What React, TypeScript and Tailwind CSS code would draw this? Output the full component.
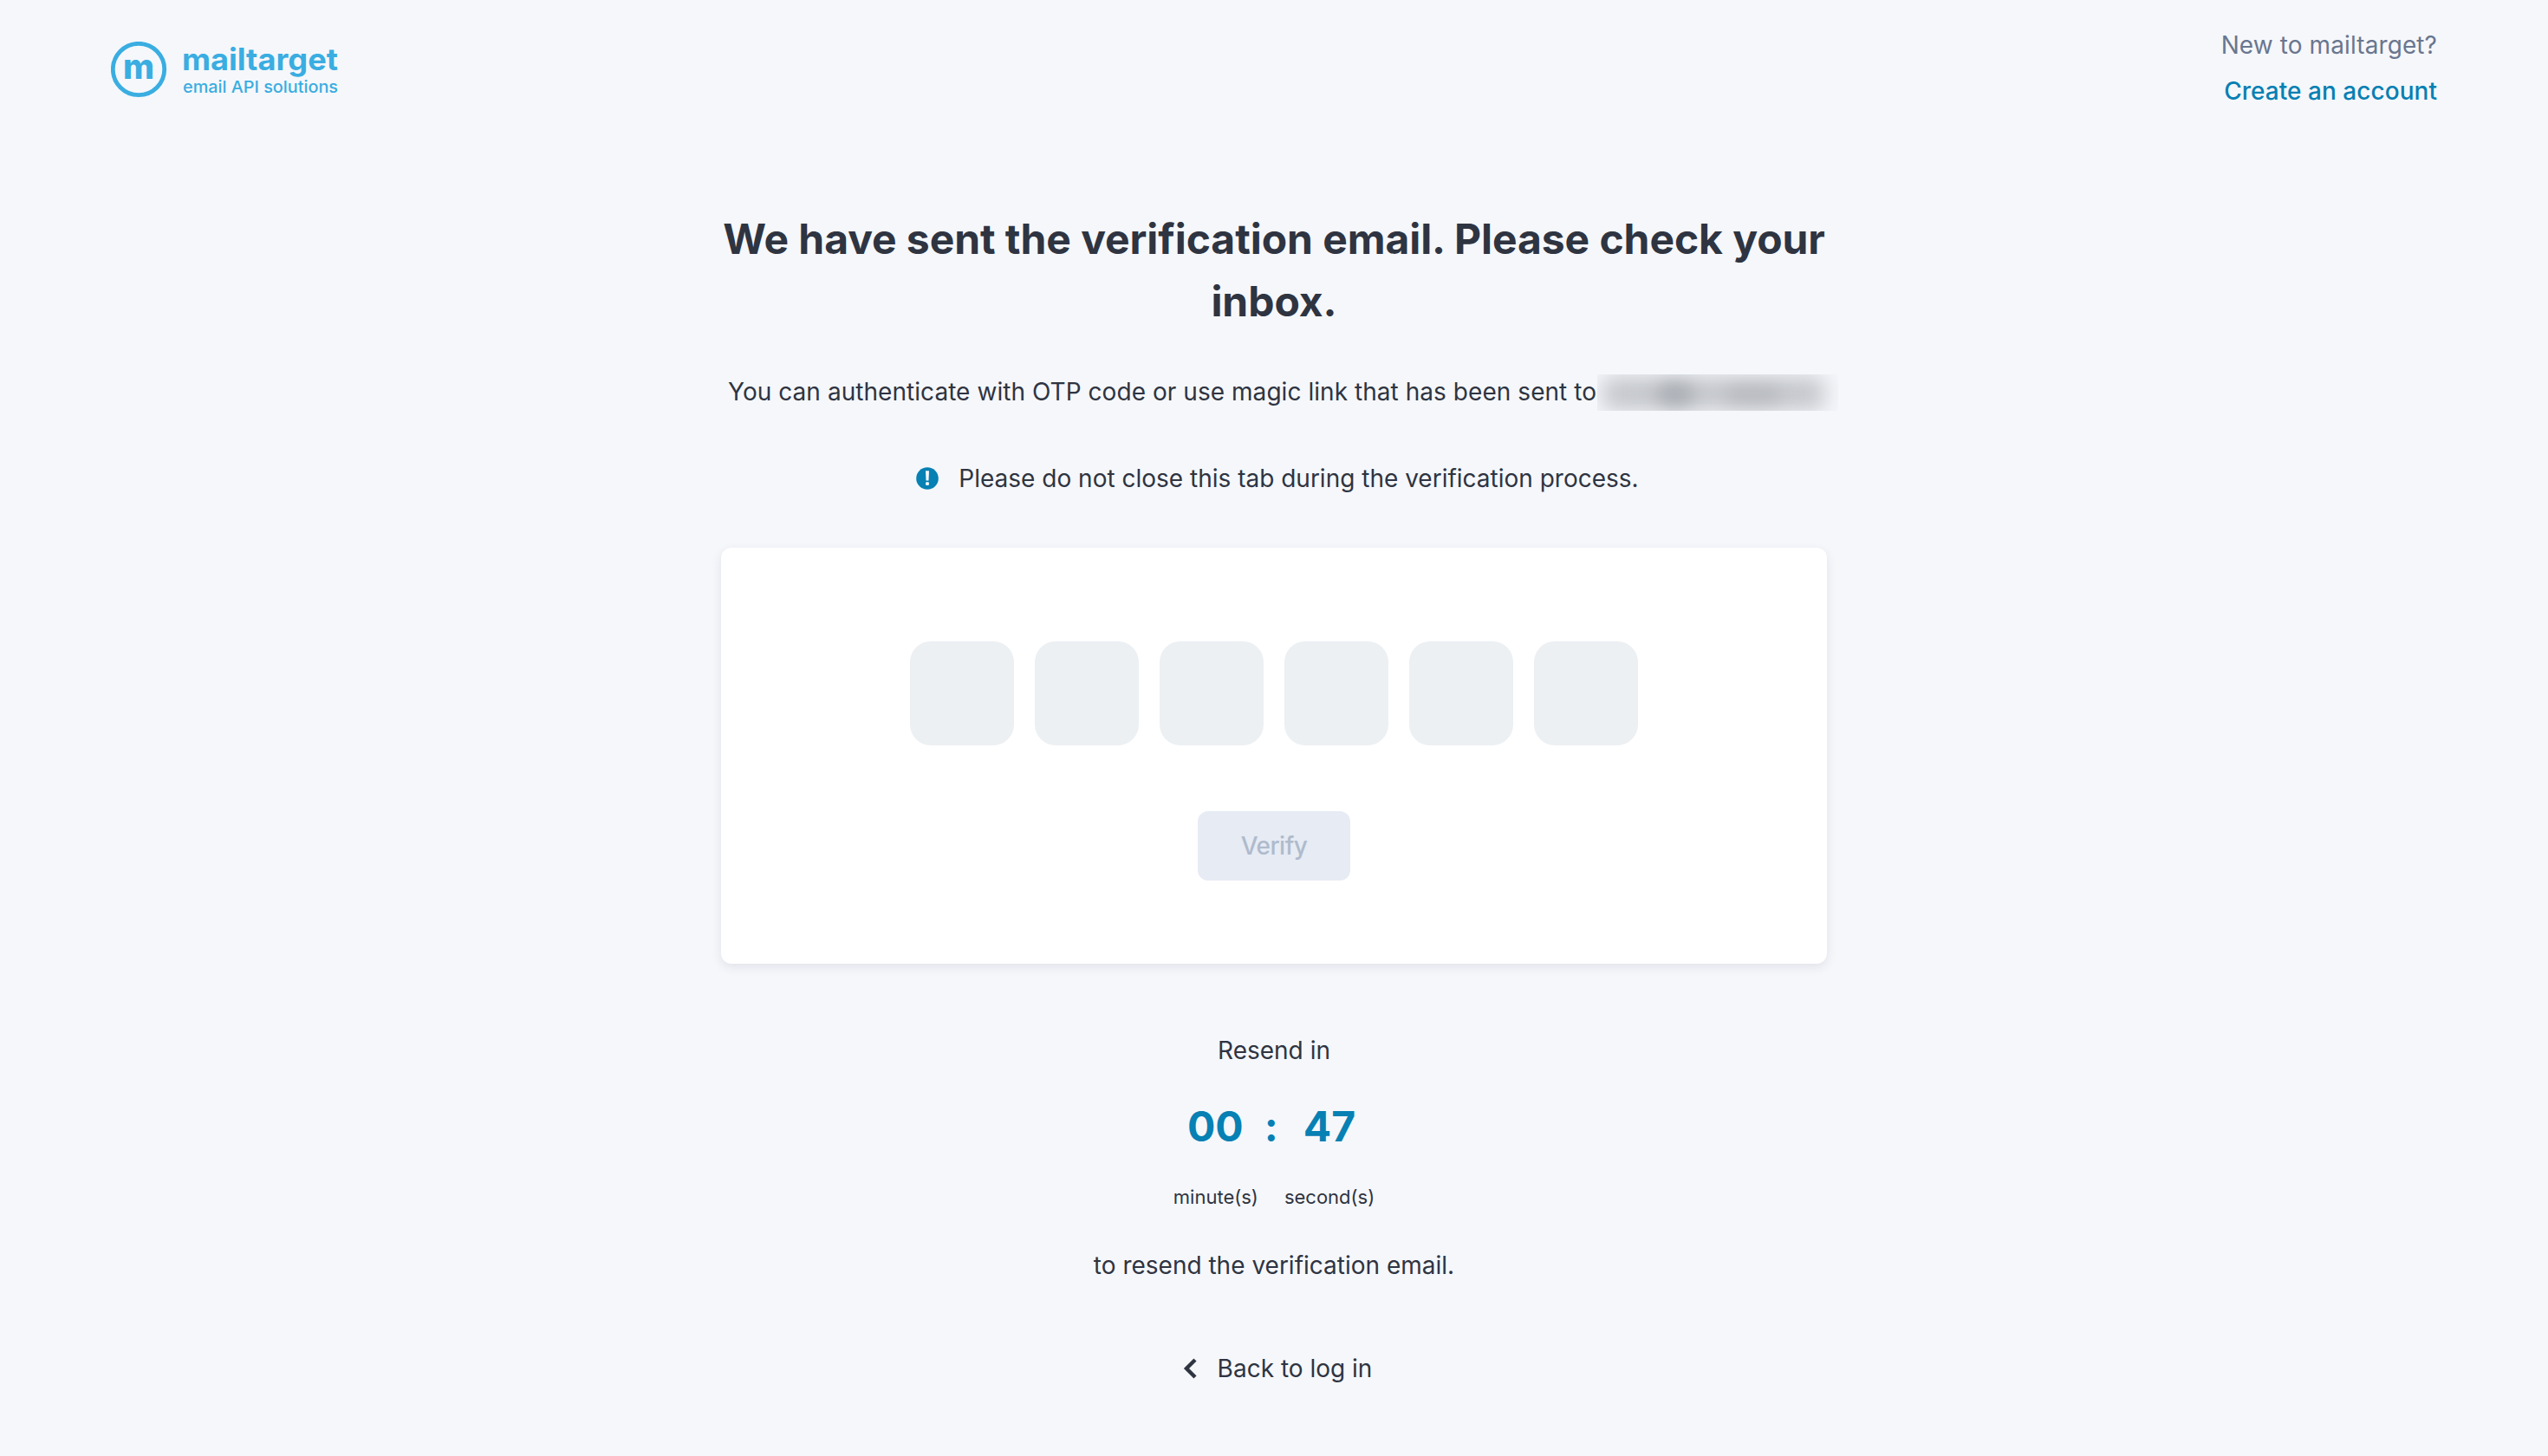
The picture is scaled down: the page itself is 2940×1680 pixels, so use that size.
import React, { useState } from 'react';

const Logo = () => (
    <svg width="264" height="72" viewBox="0 0 264 72" fill="#3AADE1" className="block">
        <circle cx="32" cy="32" r="29.7" fill="none" stroke="#3AADE1" strokeWidth="4.8" />
        <g fontFamily="Inter, sans-serif">
            <text x="14" y="43" fontSize="40" fontWeight="800" textLength="36" lengthAdjust="spacingAndGlyphs">m</text>
            <text x="82" y="33" fontSize="35" fontWeight="700" textLength="180" lengthAdjust="spacingAndGlyphs">mailtarget</text>
            <text x="83" y="58.5" fontSize="19" fontWeight="450" textLength="179" lengthAdjust="spacingAndGlyphs">email API solutions</text>
        </g>
    </svg>
);

const AlertIcon = () => (
    <svg width="26" height="26" viewBox="0 0 26 26" className="block">
        <circle cx="13" cy="13" r="12.8" fill="#0780B3" />
        <path d="M11 4.2h4l-.5 11.2h-3z" fill="#F5F7FB" />
        <rect x="11.1" y="17.3" width="3.8" height="3.6" rx="1" fill="#F5F7FB" />
    </svg>
);

const ChevronLeft = () => (
    <svg width="16" height="24" viewBox="0 0 16 24" className="block">
        <path d="M14 2 4 12l10 10" fill="none" stroke="#2F3441" strokeWidth="4.4" />
    </svg>
);

const MaskedEmail = () => (
    <span className="relative block shrink-0 w-[278px] h-[42px] mt-px ml-px overflow-hidden">
        <span className="absolute left-[6px] top-[3px] w-[256px] h-[38px] rounded-lg bg-[#c4c6cb] blur-[12px]"></span>
        <span className="absolute left-[68px] top-[8px] w-[44px] h-[30px] rounded-full bg-[#8e949a] opacity-50 blur-[10px]"></span>
        <span className="absolute left-[148px] top-[12px] w-[64px] h-[24px] rounded-full bg-[#94979d] opacity-30 blur-[10px]"></span>
    </span>
);

const OtpInput = () => {
    const [code, setCode] = useState(['', '', '', '', '', '']);

    const handleChange = (index: number, value: string) => {
        setCode(code.map((digit, i) => (i === index ? value : digit)));
    };

    return (
        <div className="flex gap-6">
            {code.map((digit, i) => (
                <input
                    key={i}
                    type="text"
                    maxLength={1}
                    value={digit}
                    onChange={(e) => handleChange(i, e.target.value)}
                    className="size-[120px] rounded-3xl bg-[#ECF0F3] text-center text-5xl outline-none"
                />
            ))}
        </div>
    );
};

const App = () => {
    return (
        <div className="w-full h-[1680px] overflow-hidden bg-[#F5F7FB] font-['Inter',sans-serif] text-[28px] leading-[42px] text-[#2F3441]">
            <header className="flex items-start justify-between h-[240px] px-32">
                <div className="pt-12">
                    <Logo />
                </div>
                <div className="flex flex-col items-end gap-[11px] pt-[31px]">
                    <span className="tracking-[0.1px] text-[#69768F]">New to mailtarget?</span>
                    <a href="#" className="font-medium tracking-[0.04px] text-[#0780B3]">Create an account</a>
                </div>
            </header>

            <main className="flex flex-col items-center w-[1276px] mx-auto">
                <h1 className="text-[48px] leading-[72px] font-bold tracking-[-0.06px] text-center whitespace-nowrap">
                    We have sent the verification email. Please check your
                    <br />
                    inbox.
                </h1>
                <div className="flex w-full h-[42px] pl-2 mt-[47px] whitespace-nowrap">
                    <span className="tracking-[0.05px]">You can authenticate with OTP code or use magic link that has been sent to</span>
                    <MaskedEmail />
                </div>
                <div className="flex items-center gap-[23px] pl-2 mt-[58px]">
                    <AlertIcon />
                    <span>Please do not close this tab during the verification process.</span>
                </div>

                <div className="flex flex-col items-center w-full h-[480px] mt-[59px] pt-[108px] rounded-xl bg-white shadow-[0_4px_12px_rgba(47,52,65,0.1)]">
                    <OtpInput />
                    <button
                        type="button"
                        disabled
                        className="w-[176px] h-20 mt-[76px] rounded-xl bg-[#E6EBF4] font-medium tracking-[-0.5px] text-[#AFBBCC]"
                    >
                        Verify
                    </button>
                </div>

                <p className="mt-[79px]">Resend in</p>
                <div className="flex pr-[6px] mt-[31px] text-[48px] leading-[72px] font-bold text-[#0780B3]">
                    <span>00</span>
                    <span className="ml-6 mr-[29px]">:</span>
                    <span>47</span>
                </div>
                <div className="flex gap-[30px] mt-[29px] text-[22px] leading-[33px]">
                    <span>minute(s)</span>
                    <span>second(s)</span>
                </div>
                <p className="mt-[41px]">to resend the verification email.</p>
                <a href="#" className="flex items-center gap-6 pl-2 mt-[77px]">
                    <ChevronLeft />
                    <span>Back to log in</span>
                </a>
            </main>
        </div>
    );
};

export default App;
